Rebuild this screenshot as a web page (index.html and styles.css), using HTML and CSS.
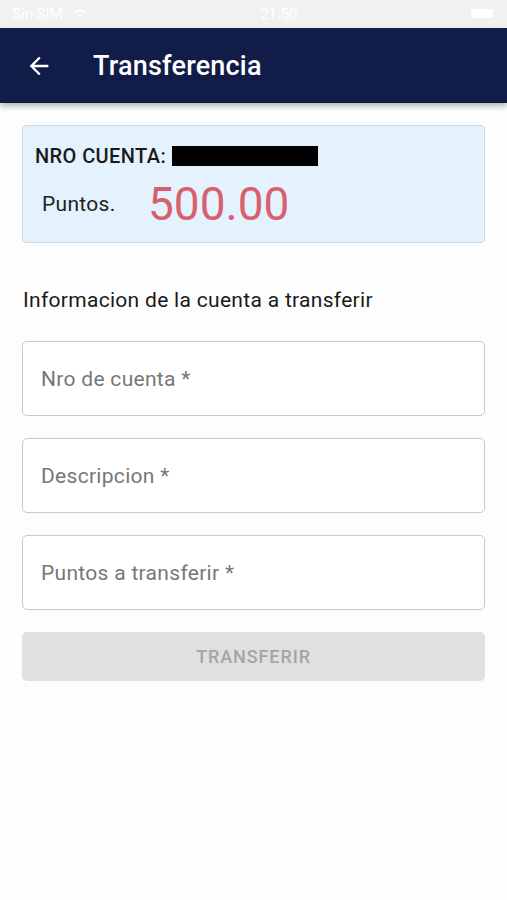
FILE: index.html
```html
<!DOCTYPE html>
<html>
<head>
  <title>Transferencia</title>
  <link rel="stylesheet" href="styles.css">
</head>
<body>
  <div class="status-bar">
    <span class="carrier">Sin SIM
      <svg class="wifi" width="14" height="10" viewBox="0 0 14 10"><path d="M1 4 Q7 -1 13 4" stroke="#fff" stroke-width="2" fill="none"/><path d="M4 7 Q7 5 10 7" stroke="#fff" stroke-width="2" fill="none"/></svg>
    </span>
    <span class="clock">21:50</span>
    <span class="battery"></span>
  </div>

  <header class="app-bar">
    <svg class="back" width="24" height="24" viewBox="0 0 24 24">
      <path d="M20 11H7.83l5.59-5.59L12 4l-8 8 8 8 1.41-1.41L7.83 13H20v-2z" fill="#fff"/>
    </svg>
    <h1>Transferencia</h1>
  </header>

  <main class="content">
    <div class="account-card">
      <div class="account-row">
        <span class="account-label">NRO CUENTA:</span>
        <span class="redacted"></span>
      </div>
      <div class="points-row">
        <span class="points-label">Puntos.</span>
        <span class="points-value">500.00</span>
      </div>
    </div>

    <h2 class="section-title">Informacion de la cuenta a transferir</h2>

    <form class="transfer-form">
      <input type="text" placeholder="Nro de cuenta *" />
      <input type="text" placeholder="Descripcion *" />
      <input type="text" placeholder="Puntos a transferir *" />
      <button type="submit" disabled>TRANSFERIR</button>
    </form>
  </main>
</body>
</html>
```

FILE: styles.css
```css
body {
  margin: 0;
  font-family: Roboto, "Noto Sans", sans-serif;
  background-color: #fdfdfd;
  color: #222;
}

.status-bar {
  height: 27px;
  background-color: #f1f1f1;
  color: #fff;
  font-size: 15px;
  display: flex;
  align-items: center;
  justify-content: space-between;
  padding: 0 14px 0 12px;
  border-bottom: 1px solid #fafafa;
}

.carrier {
  display: flex;
  align-items: center;
  gap: 10px;
}

.battery {
  width: 22px;
  height: 9px;
  background-color: #fff;
  border-radius: 2px;
}

.app-bar {
  height: 75px;
  background-color: #121c48;
  display: flex;
  align-items: center;
  padding: 0 25px;
  box-shadow: 0 3px 6px rgba(0,0,0,0.3);
}

.back {
  width: 28px;
  height: 28px;
}

.app-bar h1 {
  margin: 0 0 0 40px;
  color: #fff;
  font-size: 27px;
  font-weight: 500;
  letter-spacing: 0.2px;
}

.content {
  padding: 22px 22px;
}

.account-card {
  background-color: #e3f2fd;
  border: 1px solid #c9dcea;
  border-radius: 4px;
  padding: 17px 12px 11px;
}

.account-row {
  display: flex;
  align-items: center;
  gap: 6px;
  height: 25px;
}

.account-label {
  font-size: 20px;
  font-weight: 500;
  letter-spacing: 0.4px;
  color: #1a1a1a;
}

.redacted {
  width: 146px;
  height: 20px;
  background-color: #000;
}

.points-row {
  display: flex;
  align-items: center;
  margin-top: 9px;
  padding-left: 7px;
  height: 54px;
}

.points-label {
  font-size: 21px;
  letter-spacing: 0.3px;
  color: #222;
  width: 106px;
}

.points-value {
  font-size: 46px;
  color: #d95f6e;
}

.section-title {
  font-size: 21px;
  font-weight: 400;
  letter-spacing: 0.3px;
  line-height: 25px;
  margin: 45px 0 28px 1px;
  color: #1a1a1a;
}

.transfer-form {
  display: flex;
  flex-direction: column;
  gap: 22px;
}

.transfer-form input {
  height: 75px;
  box-sizing: border-box;
  border: 1.5px solid #c9c9c9;
  border-radius: 5px;
  padding: 0 18px;
  font-family: Roboto, "Noto Sans", sans-serif;
  font-size: 21px;
  letter-spacing: 0.3px;
  background-color: #fff;
}

.transfer-form input::placeholder {
  color: #777;
}

.transfer-form button {
  height: 49px;
  border: none;
  border-radius: 5px;
  background-color: #e0e0e0;
  color: #a5a5a5;
  font-family: Roboto, "Noto Sans", sans-serif;
  font-size: 18px;
  font-weight: 500;
  letter-spacing: 0.9px;
}
```
